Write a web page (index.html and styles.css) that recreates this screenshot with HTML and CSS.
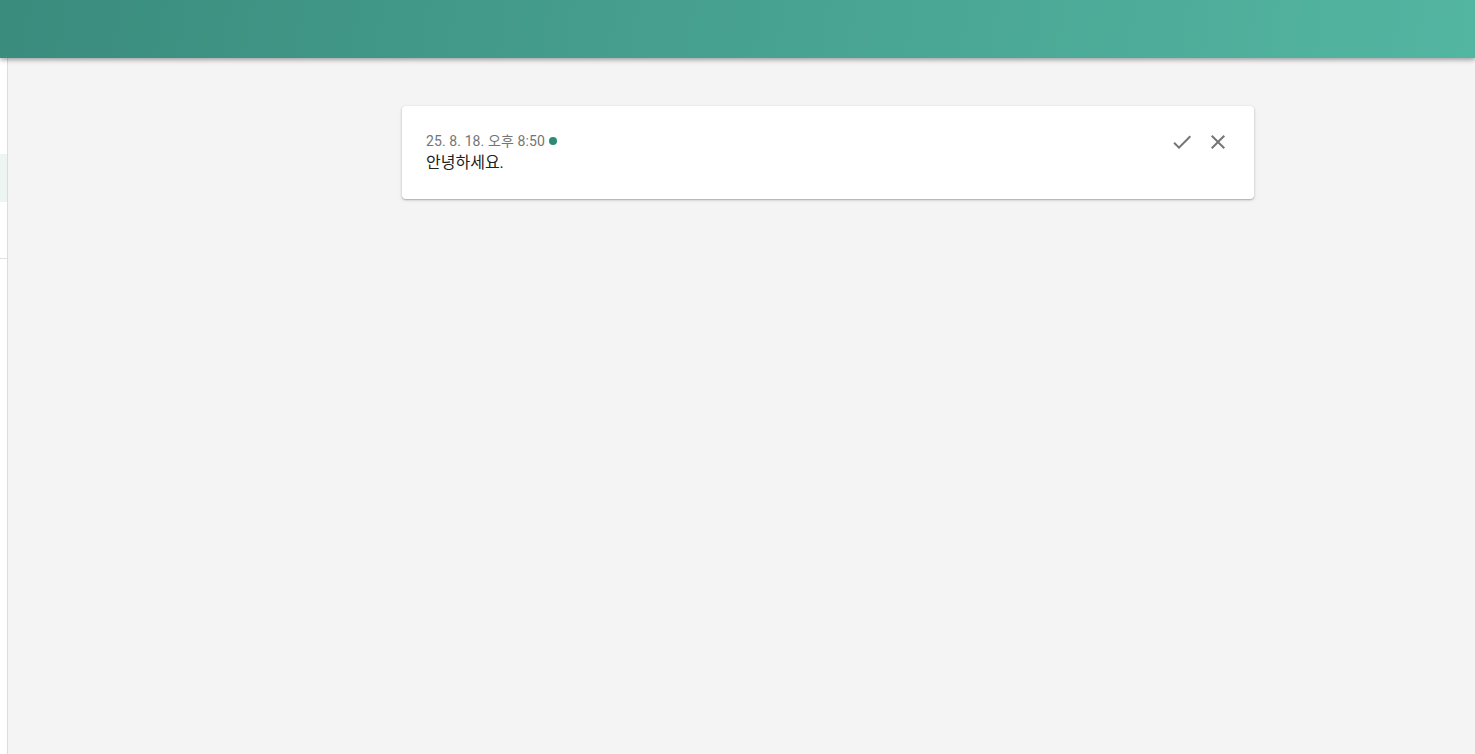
FILE: index.html
```html
<!DOCTYPE html>
<html lang="ko">
<head>
<meta charset="utf-8">
<title>알림</title>
<link rel="stylesheet" href="styles.css">
</head>
<body>
  <header class="topbar"></header>
  <div class="layout">
    <nav class="sidebar">
      <div class="nav-gap"></div>
      <div class="nav-item active"></div>
      <div class="nav-item"></div>
    </nav>
    <main class="content">
      <article class="notice">
        <div class="notice-body">
          <div class="notice-meta">
            <span class="notice-time">25. 8. 18. 오후 8:50</span>
            <span class="unread-dot"></span>
          </div>
          <p class="notice-text">안녕하세요.</p>
        </div>
        <div class="notice-actions">
          <button class="icon-btn" type="button" aria-label="읽음">
            <svg viewBox="0 0 24 24" width="24" height="24"><path d="M9 16.17L4.83 12l-1.42 1.41L9 19 21 7l-1.41-1.41z"/></svg>
          </button>
          <button class="icon-btn" type="button" aria-label="삭제">
            <svg viewBox="0 0 24 24" width="24" height="24"><path d="M19 6.41L17.59 5 12 10.59 6.41 5 5 6.41 10.59 12 5 17.59 6.41 19 12 13.41 17.59 19 19 17.59 13.41 12z"/></svg>
          </button>
        </div>
      </article>
    </main>
  </div>
</body>
</html>
```

FILE: styles.css
```css
* { box-sizing: border-box; }

html, body {
  margin: 0;
  height: 100%;
}

body {
  font-family: Roboto, "Noto Sans CJK KR", sans-serif;
  background: #f4f4f4;
  color: #212121;
  display: flex;
  flex-direction: column;
  overflow: hidden;
}

.topbar {
  height: 58px;
  flex: none;
  background: linear-gradient(100deg, #3a8c7d 0%, #469f8f 45%, #53b6a1 100%);
  box-shadow: 0 2px 4px rgba(0, 0, 0, 0.28), 0 1px 8px rgba(0, 0, 0, 0.1);
  position: relative;
  z-index: 2;
}

.layout {
  flex: 1;
  display: flex;
  min-height: 0;
}

/* collapsed navigation rail */
.sidebar {
  width: 8px;
  flex: none;
  background: #fff;
  border-right: 1px solid #dcdcdc;
  display: flex;
  flex-direction: column;
}

.nav-gap { height: 96px; }

.nav-item.active {
  height: 48px;
  background: #edf5f3;
}

.nav-item + .nav-item {
  height: 57px;
  border-bottom: 1px solid #e0e0e0;
}

.content {
  flex: 1;
  padding: 48px 0 0 394px;
}

.notice {
  width: 852px;
  background: #fff;
  border-radius: 4px;
  box-shadow: 0 1px 3px rgba(0, 0, 0, 0.25), 0 1px 1px rgba(0, 0, 0, 0.1);
  padding: 25px 24px 25px 24px;
  display: flex;
  justify-content: space-between;
  align-items: flex-start;
}

.notice-meta {
  display: flex;
  align-items: center;
  gap: 4px;
  height: 20px;
}

.notice-time {
  font-size: 14px;
  letter-spacing: 0.1px;
  color: #757575;
  line-height: 20px;
}

.unread-dot {
  width: 8px;
  height: 8px;
  border-radius: 50%;
  background: #2e8a72;
}

.notice-text {
  margin: 0;
  font-size: 16px;
  line-height: 23px;
  color: #212121;
}

.notice-actions {
  display: flex;
  gap: 12px;
  margin-top: -1px;
}

.icon-btn {
  width: 24px;
  height: 24px;
  padding: 0;
  border: 0;
  background: none;
  cursor: pointer;
  fill: #757575;
}

.icon-btn svg { display: block; }
```
